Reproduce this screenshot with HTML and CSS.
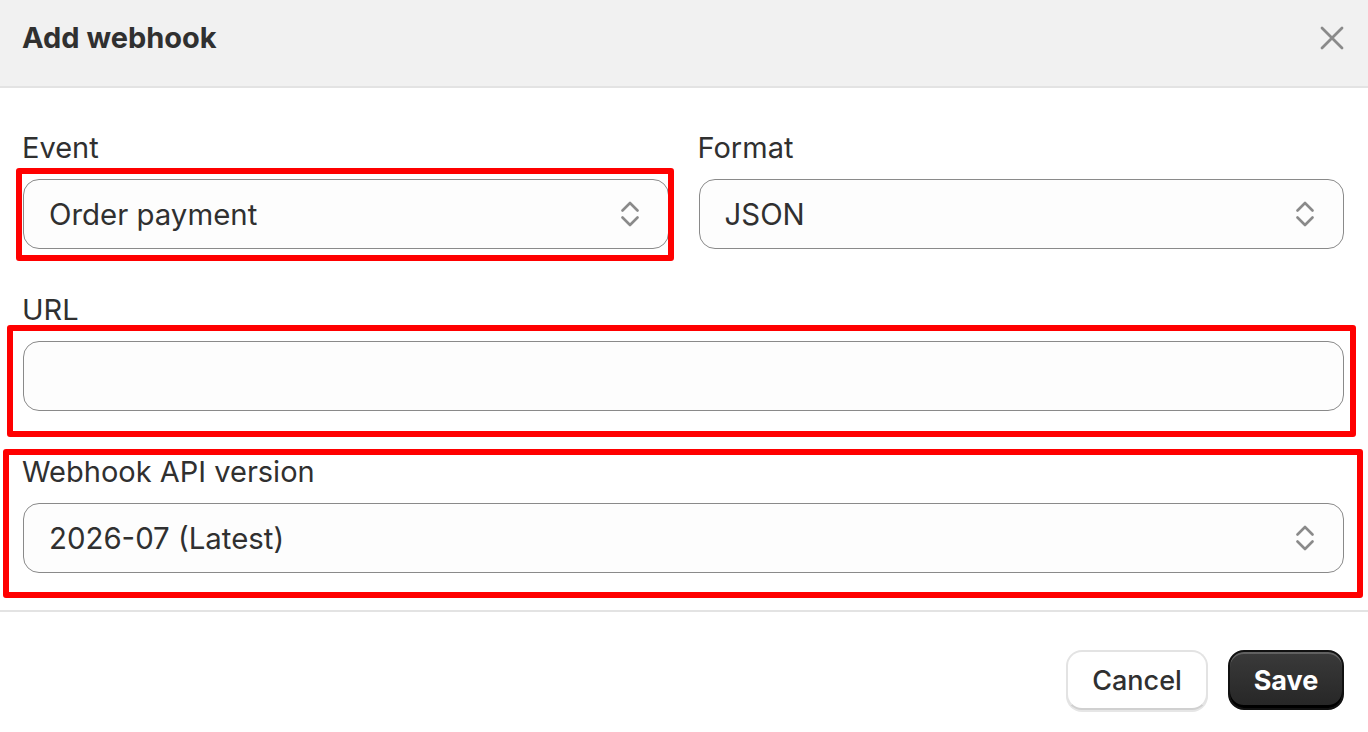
FILE: index.html
```html
<!DOCTYPE html>
<html lang="en">
<head>
<meta charset="utf-8">
<title>Add webhook</title>
<link rel="stylesheet" href="styles.css">
</head>
<body>
<div class="modal">
  <header class="modal-header">
    <h2 class="modal-title">Add webhook</h2>
    <button class="close-btn" aria-label="Close">
      <svg width="24" height="24" viewBox="0 0 24 24"><path d="M2 2 L22 22 M22 2 L2 22" stroke="#8a8a8a" stroke-width="2.8" stroke-linecap="round" fill="none"/></svg>
    </button>
  </header>
  <div class="modal-body">
    <div class="row">
      <div class="field">
        <label class="label">Event</label>
        <div class="control select">
          <span class="value">Order payment</span>
          <svg class="chev" width="18" height="26" viewBox="0 0 18 26"><path d="M1.5 9.5 L9 2 L16.5 9.5 M1.5 16.5 L9 24 L16.5 16.5" stroke="#8a8a8a" stroke-width="2.6" stroke-linecap="round" stroke-linejoin="round" fill="none"/></svg>
        </div>
      </div>
      <div class="field">
        <label class="label">Format</label>
        <div class="control select">
          <span class="value">JSON</span>
          <svg class="chev" width="18" height="26" viewBox="0 0 18 26"><path d="M1.5 9.5 L9 2 L16.5 9.5 M1.5 16.5 L9 24 L16.5 16.5" stroke="#8a8a8a" stroke-width="2.6" stroke-linecap="round" stroke-linejoin="round" fill="none"/></svg>
        </div>
      </div>
    </div>
    <div class="field">
      <label class="label">URL</label>
      <div class="control input"></div>
    </div>
    <div class="field">
      <label class="label">Webhook API version</label>
      <div class="control select">
        <span class="value">2026-07 (Latest)</span>
        <svg class="chev" width="18" height="26" viewBox="0 0 18 26"><path d="M1.5 9.5 L9 2 L16.5 9.5 M1.5 16.5 L9 24 L16.5 16.5" stroke="#8a8a8a" stroke-width="2.6" stroke-linecap="round" stroke-linejoin="round" fill="none"/></svg>
      </div>
    </div>
  </div>
  <footer class="modal-footer">
    <button class="btn btn-secondary">Cancel</button>
    <button class="btn btn-primary">Save</button>
  </footer>
  <div class="mark mark-event"></div>
  <div class="mark mark-url"></div>
  <div class="mark mark-version"></div>
</div>
</body>
</html>
```
FILE: styles.css
```css
* { box-sizing: border-box; }
html, body {
  margin: 0;
  padding: 0;
  background: #ffffff;
}
body {
  font-family: Inter, "Noto Sans", sans-serif;
  color: #303030;
}
.modal {
  position: relative;
  width: 1368px;
  height: 732px;
  background: #fff;
}
.modal-header {
  height: 88px;
  background: #f1f1f1;
  border-bottom: 2px solid #e3e3e3;
  display: flex;
  align-items: center;
  justify-content: space-between;
  padding: 0 24px 12px 22px;
}
.modal-title {
  margin: 0;
  font-size: 29px;
  font-weight: 700;
  color: #303030;
}
.close-btn {
  background: none;
  border: 0;
  padding: 0;
  width: 24px;
  height: 24px;
  display: flex;
  margin-top: 2px;
}
.modal-body {
  padding: 42px 24px 37px 23px;
  display: flex;
  flex-direction: column;
  gap: 43px;
}
.row {
  display: grid;
  grid-template-columns: 1fr 1fr;
  gap: 30px;
}
.field {
  display: flex;
  flex-direction: column;
}
.label {
  font-size: 29px;
  line-height: 32px;
  padding-top: 2px;
  margin-bottom: 15px;
  margin-left: -1px;
  color: #303030;
}
.control {
  height: 70px;
  border: 1.5px solid #8a8a8a;
  border-radius: 16px;
  background: #fdfdfd;
  display: flex;
  align-items: center;
  justify-content: space-between;
  padding: 0 29px 0 25px;
}
.value {
  font-size: 29.4px;
  color: #303030;
}
.chev { flex: none; }
.modal-footer {
  border-top: 2px solid #e3e3e3;
  display: flex;
  justify-content: flex-end;
  gap: 20px;
  padding: 38px 24px 0 0;
}
.btn {
  height: 60px;
  border-radius: 16px;
  font-family: Inter, "Noto Sans", sans-serif;
  font-size: 27px;
  padding: 0;
}
.btn-secondary {
  width: 142px;
  background: #fff;
  color: #303030;
  font-weight: 500;
  border: 2px solid #e3e3e3;
  border-bottom-color: #d0d0d0;
  box-shadow: 0 2px 0 #e6e6e6;
}
.btn-primary {
  width: 116px;
  background: linear-gradient(#3a3a3a, #262626);
  color: #fff;
  font-weight: 700;
  border: 2px solid #111;
  box-shadow: inset 0 2px 0 rgba(255,255,255,0.2), inset 0 -3px 0 #000;
}
.mark {
  position: absolute;
  border: 6px solid #ff0000;
  border-radius: 3px;
  pointer-events: none;
}
.mark-event { left: 16px; top: 168px; width: 658px; height: 93px; }
.mark-url { left: 7px; top: 325px; width: 1349px; height: 112px; }
.mark-version { left: 3px; top: 449px; width: 1360px; height: 149px; }
```
